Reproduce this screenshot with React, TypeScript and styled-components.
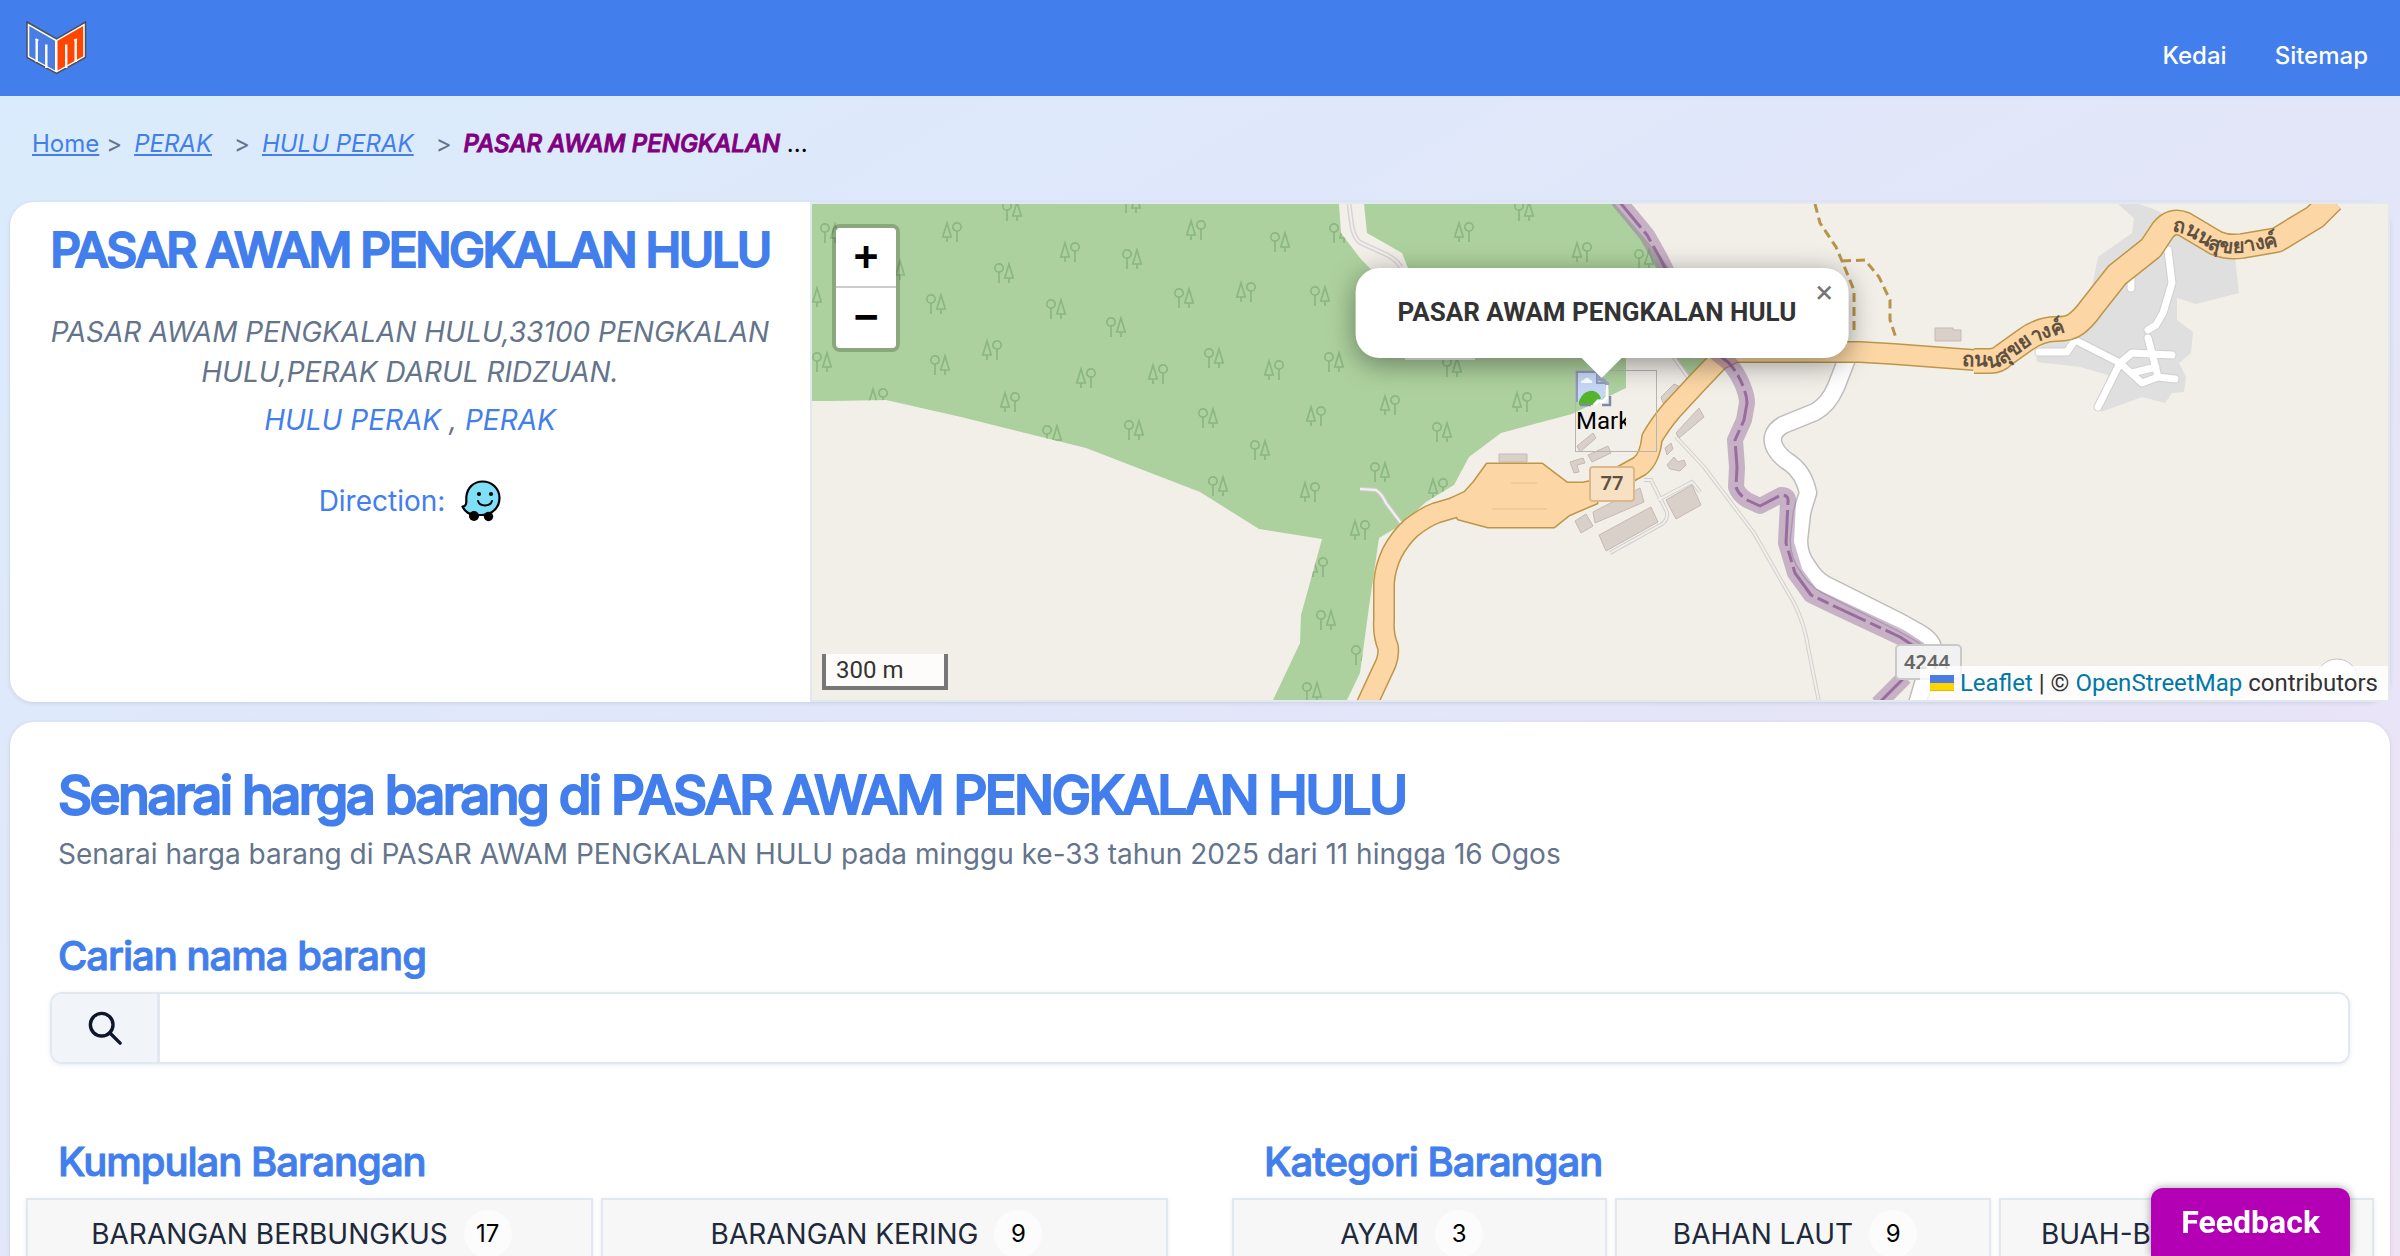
import React from "react";
import styled, { createGlobalStyle } from "styled-components";

const INTER = `Inter, "Liberation Sans", sans-serif`;
const ROBOTO = `Roboto, "Liberation Sans", sans-serif`;
const BLUE = "#427eec";
const SLATE = "#64748b";
const LINE = "#e2e8f0";

const GlobalStyle = createGlobalStyle`
  html { scrollbar-width: none; }
  body {
    margin: 0;
    font-family: ${INTER};
    background: #fff;
    color: #0f172a;
  }
  *, *::before, *::after { box-sizing: border-box; }
  h1, h2, h3, p, ol, ul, address { margin: 0; padding: 0; }
  button, input { font: inherit; }
`;

const Page = styled.div`
  min-height: 100vh;
  padding-bottom: 20px;
  background: linear-gradient(to bottom right, #d9ecfd, #e4e5f8 60%, #f0e2f5);
`;

const Header = styled.header`
  display: flex;
  justify-content: space-between;
  align-items: center;
  height: 96px;
  padding: 0 32px 0 24px;
  background: ${BLUE};
`;

const LogoLink = styled.a`
  display: block;
  line-height: 0;
`;

const HeaderNav = styled.nav`
  display: flex;
  gap: 48px;
  padding-top: 16px;
  font-size: 24px;
  font-weight: 500;
  line-height: 32px;
`;

const HeaderLink = styled.a`
  color: #fff;
  text-decoration: none;
`;

const Crumbs = styled.ol`
  display: flex;
  list-style: none;
  padding: 30px 32px 40px;
  font-size: 24px;
  line-height: 36px;
`;

const Crumb = styled.li<{ $gap?: number }>`
  display: flex;
  &:not(:first-child)::before {
    content: ">";
    margin: 0 12px 0 ${(p) => p.$gap ?? 22}px;
    color: ${SLATE};
  }
`;

const CrumbLink = styled.a<{ $italic?: boolean }>`
  color: ${BLUE};
  font-style: ${(p) => (p.$italic ? "italic" : "normal")};
  text-decoration: underline;
`;

const CrumbCurrent = styled.span`
  color: #000;
  em {
    color: #800080;
    font-weight: 500;
    -webkit-text-stroke: 1px #800080;
  }
`;

const Card = styled.section`
  margin: 0 10px 20px;
  border-radius: 24px;
  background: #fff;
  box-shadow: 0 1px 4px rgba(100, 116, 139, 0.2);
`;

const ShopCard = styled(Card)`
  display: grid;
  grid-template-columns: minmax(0, 40fr) minmax(0, 79fr);
  min-height: 500px;
`;

const ShopInfo = styled.div`
  padding: 18px 24px;
  text-align: center;
  font-size: 28px;
  line-height: 40px;
  color: ${SLATE};
`;

const Title = styled.h1`
  font-size: 48px;
  line-height: 60px;
  font-weight: 500;
  letter-spacing: -0.05em;
  color: ${BLUE};
  -webkit-text-stroke: 2px ${BLUE};
`;

const Address = styled.address`
  margin-top: 32px;
  font-style: italic;
`;

const Area = styled.p`
  margin-top: 8px;
  font-style: italic;
`;

const AreaLink = styled.a`
  color: ${BLUE};
  text-decoration: none;
`;

const Direction = styled.p`
  display: flex;
  justify-content: center;
  align-items: center;
  gap: 16px;
  margin-top: 40px;
  color: ${BLUE};
`;

const MapBox = styled.div`
  position: relative;
  overflow: hidden;
  border: 2px solid ${LINE};
  background: #f2efe9;
  font-family: ${ROBOTO};
  color: #333;
`;

const MapDrawing = styled.svg`
  position: absolute;
  inset: 0;
  width: 100%;
  height: 100%;
`;

const ZoomControl = styled.div`
  position: absolute;
  top: 20px;
  left: 20px;
  border: 4px solid rgba(0, 0, 0, 0.2);
  border-radius: 8px;
  background-clip: padding-box;
`;

const ZoomButton = styled.button`
  display: block;
  width: 60px;
  height: 60px;
  padding: 0 0 4px;
  border: 0;
  background: #fff;
  color: #000;
  font: bold 40px/56px "DejaVu Sans Mono", monospace;
  &:first-child {
    border-bottom: 2px solid #ccc;
    border-radius: 4px 4px 0 0;
  }
  &:last-child {
    border-radius: 0 0 4px 4px;
  }
`;

const Scale = styled.div`
  position: absolute;
  left: 10px;
  bottom: 10px;
  width: 126px;
  padding: 0 10px;
  border: 4px solid #777;
  border-top: 0;
  background: rgba(255, 255, 255, 0.8);
  font-size: 24px;
  line-height: 32px;
`;

const Attribution = styled.div`
  position: absolute;
  right: 0;
  bottom: 0;
  display: flex;
  align-items: center;
  padding: 0 10px;
  background: rgba(255, 255, 255, 0.8);
  font-size: 24px;
  line-height: 34px;
  white-space: pre;
`;

const MapLink = styled.a`
  color: #0078a8;
  text-decoration: none;
`;

const Flag = styled.svg`
  margin-right: 6px;
`;

const Popup = styled.div`
  position: absolute;
  left: 50%;
  top: 64px;
  margin-left: 2px;
  transform: translateX(-50%);
  padding: 24px 52px 26px 42px;
  border-radius: 24px;
  background: #fff;
  box-shadow: 0 6px 28px rgba(0, 0, 0, 0.4);
  font-size: 26px;
  font-weight: 700;
  line-height: 40px;
  white-space: nowrap;
  &::after {
    content: "";
    position: absolute;
    left: 50%;
    top: 100%;
    margin-left: -20px;
    border: 20px solid transparent;
    border-top-color: #fff;
    border-bottom: 0;
  }
`;

const PopupClose = styled.button`
  position: absolute;
  top: 0;
  right: 0;
  width: 48px;
  height: 48px;
  padding: 0;
  border: 0;
  background: transparent;
  color: #757575;
  font: 32px/46px ${ROBOTO};
`;

const Marker = styled.div`
  position: absolute;
  left: 50%;
  top: 166px;
  margin-left: -25px;
  width: 82px;
  height: 82px;
  border: 1px solid #b5b5b5;
  color: #000;
  font-size: 24px;
  line-height: 28px;
`;

const MarkerAlt = styled.span`
  display: block;
  width: 50px;
  overflow: hidden;
  svg { display: block; }
`;

const PriceCard = styled(Card)`
  padding: 40px 16px;
`;

const Intro = styled.div`
  padding: 0 32px;
`;

const SectionTitle = styled(Title).attrs({ as: "h2" })`
  font-size: 53px;
  line-height: 66px;
`;

const Lead = styled.p`
  margin-top: 6px;
  font-size: 28px;
  line-height: 40px;
  color: ${SLATE};
`;

const SubTitle = styled.h3`
  padding: 0 32px;
  margin-bottom: 12px;
  font-size: 40px;
  line-height: 48px;
  font-weight: 500;
  letter-spacing: -0.025em;
  color: ${BLUE};
  -webkit-text-stroke: 1px ${BLUE};
`;

const Search = styled.form`
  margin-top: 58px;
`;

const SearchBox = styled.div`
  display: flex;
  height: 72px;
  margin: 0 24px;
  overflow: hidden;
  border: 2px solid ${LINE};
  border-radius: 12px;
  box-shadow: 0 1px 4px rgba(100, 116, 139, 0.15);
`;

const SearchButton = styled.button`
  display: flex;
  justify-content: center;
  align-items: center;
  width: 108px;
  border: 0;
  border-right: 3px solid ${LINE};
  background: #f1f5f9;
  color: #0f172a;
`;

const SearchInput = styled.input`
  flex: 1;
  min-width: 0;
  padding: 0 24px;
  border: 0;
  outline: 0;
  background: #fff;
  font-size: 28px;
`;

const Groups = styled.div`
  display: grid;
  grid-template-columns: repeat(2, minmax(0, 1fr));
  gap: 64px;
  margin-top: 74px;
`;

const Tiles = styled.div<{ $columns: number }>`
  display: grid;
  grid-template-columns: repeat(${(p) => p.$columns}, minmax(0, 1fr));
  gap: 8px;
`;

const Tile = styled.button`
  display: flex;
  justify-content: center;
  align-items: center;
  gap: 16px;
  padding: 10px 16px 10px 0;
  border: 2px solid ${LINE};
  background: #f7f7f7;
  color: #1e293b;
  font-size: 28px;
  line-height: 40px;
  white-space: nowrap;
  box-shadow: 0 1px 4px rgba(100, 116, 139, 0.15);
`;

const Count = styled.span`
  width: 48px;
  height: 48px;
  border-radius: 50%;
  background: #fcfcfc;
  color: #000;
  font-size: 24px;
  line-height: 48px;
  text-align: center;
`;

const Feedback = styled.button`
  position: fixed;
  right: 50px;
  bottom: 0;
  padding: 14px 30px;
  border: 0;
  border-radius: 12px 12px 0 0;
  background: #b400b4;
  color: #fff;
  font: 700 32px/40px ${ROBOTO};
  box-shadow: 0 0 8px rgba(0, 0, 0, 0.4);
`;

const Logo = () => (
  <svg width="64" height="56" viewBox="24 19 64 56" fill="none" aria-hidden="true">
    <path d="M27 21 56.5 38 85.500 21V56.500L56.500 72.500 27 56.500Z" fill="#fff" stroke="#4d4f58" strokeWidth="1.500" />
    <path d="M29.300 25 55 39.800V69.500L29.300 55.300Z" fill="#4a7de2" />
    <path d="M83.200 25 57.500 39.800V69.500L83.200 55.300Z" fill="#ff4500" />
    <path d="M36.700 61V38M46.300 67V43.500M66.200 67V43.500M75.700 61V38" stroke="#fff" strokeWidth="2.400" />
    <path d="M35.500 37.800 38.500 39.300M74 39.300 77 37.800" stroke="#fff" strokeWidth="1.500" />
  </svg>
);

const WazeIcon = () => (
  <svg width="40" height="42" viewBox="0 0 40 42" role="img" aria-label="Waze">
    <path
      d="M21.500 1.500C31 1.500 38.500 8.800 38.500 18 38.500 27.500 31 34.800 21 35H14C8.500 34.500 3.500 31 1.500 26.500 4.500 26.300 5.500 24.500 5.300 21V17C6 8 12.500 1.500 21.500 1.500Z"
      fill="#7fdff6"
      stroke="#000"
      strokeWidth="2.200"
      strokeLinejoin="round"
    />
    <circle cx="13" cy="36" r="5" />
    <circle cx="27.500" cy="36.500" r="4.700" />
    <circle cx="18" cy="14" r="2.100" />
    <circle cx="30" cy="14" r="2.100" />
    <path d="M17 21C19 27 29 27 31 21" fill="none" stroke="#000" strokeWidth="2" strokeLinecap="round" />
  </svg>
);

const SearchIcon = () => (
  <svg width="34" height="34" viewBox="0 0 36 36" fill="none" stroke="currentColor" strokeWidth="3.600" aria-hidden="true">
    <circle cx="14.500" cy="14.500" r="12" />
    <path d="M23 23 34 34" strokeLinecap="round" />
  </svg>
);

const BrokenImage = () => (
  <svg width="36" height="36" viewBox="0 0 36 36" aria-hidden="true">
    <path d="M1 1H21L29 9V24L24 31H1Z" fill="#c6d8f7" />
    <path d="M1 31V1H21V12H32" fill="none" stroke="#8f9bb5" strokeWidth="2" />
    <path d="M21 1 33 12V18H29V12L21 9Z" fill="#9aa5be" />
    <path d="M5 12C5 9 7 9 8 9 9 6 13 6 14 9 16 9 17 11 16 12Z" fill="#fff" />
    <path d="M3 30C8 18 20 16 25 27L20 32 16 34H3Z" fill="#55b32c" />
    <path d="M18 34 22 30 27 31 31 26V14" fill="none" stroke="#fff" strokeWidth="3" />
    <path d="M4 34H15M26 34H34V25" fill="none" stroke="#7e8ba6" strokeWidth="2.500" />
  </svg>
);

const FOREST =
  "M811 204H1339L1341 233 1360 258 1410 310 1405 360H1475L1480 300 1408 268 1402 253 1367 233 1364 204H1615L1661 257 1669 268 1710 357 1688 378 1672 358 1626 350V388L1572 414 1501 433 1469 457 1454 485 1426 502 1401 525 1379 538 1369 607 1360 673 1347 700H1273L1300 643 1301 615 1322 539 1259 529 1200 492 1086 448 961 417 886 400 832 401H811Z";

const ROUND_FIRST: [number, number][] = [
  [1012, 211], [1131, 203], [830, 233], [1280, 242], [1339, 233], [1132, 259], [1004, 273], [895, 270],
  [936, 304], [1056, 309], [1184, 298], [1320, 296], [1116, 327], [812, 297], [822, 362], [940, 365],
  [1214, 358], [1334, 362], [1208, 418], [1134, 430], [1052, 435], [1260, 450], [1218, 486], [1326, 620],
  [1312, 692], [1524, 211], [1644, 259], [1442, 432], [1380, 472], [1452, 367], [1361, 655],
];

const CONIFER_FIRST: [number, number][] = [
  [952, 232], [1196, 230], [1070, 252], [1246, 292], [992, 350], [1274, 370], [1086, 378], [1158, 374],
  [1010, 402], [1316, 416], [1310, 492], [1318, 567], [878, 398], [1464, 232], [1582, 252], [1390, 405],
  [1522, 402], [1438, 488], [1360, 530],
];

const BORDER_LINE =
  "M1618 200 1647 235 1660 258 1665 268 1700 340 1729 363C1742 378 1747 395 1747 403L1744 420 1735 440 1737 467 1736 487Q1738 494 1747 500L1760 506 1781 495Q1789 495 1788 502L1786 543 1795 573 1811 595 1836 607 1900 637 1920 650M1878 704 1905 677";
const MAIN_ROAD_WEST =
  "M1366 706 1386 663Q1389 655 1388 647 1383 635 1384 620V583Q1385 568 1392 553 1400 538 1411 528 1425 517 1436 513L1470 503M1580 496Q1600 492 1611 482L1640 466Q1650 458 1652 438 1660 424 1672 410L1697 383 1719 360 1735 352H1860L1894 354 1974 360";
const MAIN_ROAD_EAST =
  "M1974 361H1990Q1998 361 2004 355L2025 340Q2040 329 2056 329 2070 329 2076 324 2084 318 2091 308L2117 275 2151 248 2163 230Q2172 219 2184 224L2216 243Q2228 248 2242 246L2277 240 2315 217 2332 200";
const PLAZA =
  "M1450 499 1465 492 1474 482 1487 464H1542L1567 483H1583L1597 480V503L1569 515 1554 527H1488L1458 519Z";
const WHITE_ROAD =
  "M1848 356 1836 387Q1828 405 1815 412L1783 425Q1768 434 1775 448 1780 457 1790 463 1804 473 1808 493 1804 505 1802 513L1799 540Q1799 556 1808 567 1815 579 1826 585L1900 622 1918 632Q1936 642 1932 653L1917 704";
const VILLAGE_ROADS =
  "M2168 250 2172 283 2163 313 2156 325 2148 330M2131 278V288M2148 338 2153 357 2158 377 2175 379M2158 377 2142 383 2120 363 2075 340 2067 352H2039M2120 363 2098 407M2120 363 2132 353 2151 354 2172 355M2132 373 2156 367";
const SERVICE_ROADS =
  "M1676 437 1704 467 1754 533 1794 603Q1805 625 1808 647L1819 702M1644 480 1651 480 1667 512Q1668 520 1662 524L1610 553M1658 500 1692 482 1700 492";
const BUILDINGS =
  "M1499 454H1527V462H1499ZM1593 512 1640 488 1644 502 1595 523ZM1599 535 1651 507 1658 522 1606 551ZM1666 500 1692 485 1701 505 1676 519ZM1575 521 1586 514 1593 526 1581 533ZM1577 446 1593 433 1596 438 1580 452ZM1588 455 1608 446 1611 453 1592 462ZM1570 462 1583 458 1585 463 1577 465 1579 472 1574 473ZM1699 408 1704 417 1679 438 1676 433ZM1661 397 1674 384 1681 387 1663 403ZM1665 448 1671 443 1673 449 1667 455ZM1667 465 1674 457 1678 462 1684 460 1686 465 1680 471 1670 469ZM1935 328H1953V330H1961V341H1935Z";

const MapArt = () => (
  <MapDrawing viewBox="812 204 1576 496" preserveAspectRatio="xMidYMid slice" aria-hidden="true">
    <defs>
      <clipPath id="forest"><path d={FOREST} /></clipPath>
      <g id="round" fill="none" stroke="#8bb781" strokeWidth="1.700">
        <circle cx="-5" cy="-5" r="4.200" />
        <path d="M-5-1V10M5-9 .8 5H9.200ZM5 5V10" />
      </g>
      <path id="label-west" d="M1962 366 1992 367Q2002 367 2012 358L2035 342 2066 332" />
      <path id="label-east" d="M2172 231 2186 234 2212 250Q2226 254 2242 253L2284 245" />
    </defs>
    <rect x="600" y="0" width="2200" height="900" fill="#f2efe9" />
    <path d={FOREST} fill="#add19e" />
    <g clipPath="url(#forest)">
      {ROUND_FIRST.map(([x, y]) => <use key={`${x}-${y}`} href="#round" transform={`translate(${x} ${y})`} />)}
      {CONIFER_FIRST.map(([x, y]) => <use key={`${x}-${y}`} href="#round" transform={`translate(${x} ${y}) scale(-1 1)`} />)}
    </g>
    <path d="M2118 204 2134 218 2132 233 2098 257 2092 287 2036 353 2037 362 2080 367 2108 375 2101 412 2142 397 2165 403 2172 393 2184 392 2186 377 2179 363 2191 353 2193 332 2177 320V298L2196 304 2239 293 2235 257 2156 210 2139 204Z" fill="#dfdfdf" />
    <g fill="none">
      <path d="M1349 204 1352 227Q1355 240 1361 243L1383 253Q1395 258 1401 267" stroke="#d8d2d6" strokeWidth="5" />
      <path d="M1349 204 1352 227Q1355 240 1361 243L1383 253Q1395 258 1401 267" stroke="#f2efe9" strokeWidth="2" />
      <path d={SERVICE_ROADS} stroke="#d2cfcf" strokeWidth="4" />
      <path d={SERVICE_ROADS} stroke="#f2efe9" strokeWidth="2" />
      <path d="M1360 489 1376 490Q1382 494 1386 503L1401 523M1673 356 1690 380" stroke="#d4ccd2" strokeWidth="4" />
      <path d="M1360 489 1376 490Q1382 494 1386 503L1401 523M1673 356 1690 380" stroke="#f4f1f1" strokeWidth="2" />
      <path d="M1815 204 1820 223 1836 247 1842 261 1854 290V333M1842 261 1865 260 1879 277 1890 300V320L1896 338" stroke="#b8944a" strokeWidth="3" strokeDasharray="9 5" />
    </g>
    <path d={BUILDINGS} fill="#d9d0c9" stroke="#c6b9b1" strokeWidth="1" />
    <g fill="none" strokeLinejoin="round">
      <path d={WHITE_ROAD} stroke="#bdbdbd" strokeWidth="19" />
      <path d={VILLAGE_ROADS} stroke="#cfcfcf" strokeWidth="9" strokeLinecap="round" />
      <path d={WHITE_ROAD} stroke="#fff" strokeWidth="16" />
      <path d={VILLAGE_ROADS} stroke="#fff" strokeWidth="7" strokeLinecap="round" />
      <path d={MAIN_ROAD_WEST} stroke="#bd9748" strokeWidth="22" />
      <path d={MAIN_ROAD_EAST} stroke="#bd9748" strokeWidth="26" />
      <path d={PLAZA} stroke="#bd9748" strokeWidth="3" />
      <path d={PLAZA} fill="#fcd6a4" />
      <path d={MAIN_ROAD_WEST} stroke="#fcd6a4" strokeWidth="19" />
      <path d={MAIN_ROAD_EAST} stroke="#fcd6a4" strokeWidth="23" />
      <path d="M1511 483H1537M1492 509H1547" stroke="#eac08a" strokeWidth="1" />
      <path d={BORDER_LINE} stroke="#9c74a2" strokeOpacity=".5" strokeWidth="16" />
      <path d={BORDER_LINE} stroke="#93659a" strokeOpacity=".9" strokeWidth="3" strokeDasharray="36 5 12 5" />
    </g>
    <circle cx="2337" cy="680" r="21" fill="#fff" stroke="#c4c4c4" />
    <path d="M2230 702Q2290 678 2388 690V702Z" fill="#fff" />
    <rect x="1590" y="467" width="44" height="34" rx="3" fill="#f8e0c3" stroke="#dcb88c" strokeWidth="2" />
    <rect x="1896" y="645" width="65" height="34" rx="4" fill="#f1f1f1" stroke="#c9c9c9" strokeWidth="2" />
    <g fontFamily='"Noto Sans", sans-serif' fill="#5f5140">
      <text x="1612" y="490" fontSize="20" fontWeight="600" textAnchor="middle">77</text>
      <text x="1927" y="669" fontSize="20" fontWeight="600" fill="#666" textAnchor="middle">4244</text>
      <text fontSize="20" fontWeight="600"><textPath href="#label-west">ถนนสุขยางค์</textPath></text>
      <text fontSize="20" fontWeight="600"><textPath href="#label-east">ถนนสุขยางค์</textPath></text>
    </g>
  </MapDrawing>
);

const groups = [
  { title: "Kumpulan Barangan", tiles: [["BARANGAN BERBUNGKUS", 17], ["BARANGAN KERING", 9]] },
  { title: "Kategori Barangan", tiles: [["AYAM", 3], ["BAHAN LAUT", 9], ["BUAH-BUAHAN", 7]] },
];

export default function App() {
  return (
    <Page>
      <GlobalStyle />
      <Header>
        <LogoLink href="#" aria-label="Home"><Logo /></LogoLink>
        <HeaderNav>
          <HeaderLink href="#kedai">Kedai</HeaderLink>
          <HeaderLink href="#sitemap">Sitemap</HeaderLink>
        </HeaderNav>
      </Header>
      <nav aria-label="Breadcrumb">
        <Crumbs>
          <Crumb><CrumbLink href="#">Home</CrumbLink></Crumb>
          <Crumb $gap={7}><CrumbLink href="#perak" $italic>PERAK</CrumbLink></Crumb>
          <Crumb><CrumbLink href="#hulu-perak" $italic>HULU PERAK</CrumbLink></Crumb>
          <Crumb><CrumbCurrent><em>PASAR AWAM PENGKALAN</em> ...</CrumbCurrent></Crumb>
        </Crumbs>
      </nav>
      <main>
        <ShopCard>
          <ShopInfo>
            <Title>PASAR AWAM PENGKALAN HULU</Title>
            <Address>PASAR AWAM PENGKALAN HULU,33100 PENGKALAN HULU,PERAK DARUL RIDZUAN.</Address>
            <Area>
              <AreaLink href="#hulu-perak">HULU PERAK</AreaLink> , <AreaLink href="#perak">PERAK</AreaLink>
            </Area>
            <Direction>
              Direction: <LogoLink href="#waze"><WazeIcon /></LogoLink>
            </Direction>
          </ShopInfo>
          <MapBox>
            <MapArt />
            <Marker><MarkerAlt><BrokenImage />Marker</MarkerAlt></Marker>
            <Popup>
              PASAR AWAM PENGKALAN HULU
              <PopupClose aria-label="Close popup">×</PopupClose>
            </Popup>
            <ZoomControl>
              <ZoomButton aria-label="Zoom in">+</ZoomButton>
              <ZoomButton aria-label="Zoom out">−</ZoomButton>
            </ZoomControl>
            <Scale>300 m</Scale>
            <Attribution>
              <Flag width="24" height="16" viewBox="0 0 24 16" aria-hidden="true">
                <path fill="#4c7be1" d="M0 0h24v8H0z" />
                <path fill="#ffd500" d="M0 8h24v7H0z" />
                <path fill="#e0bc00" d="M0 15h24v1H0z" />
              </Flag>
              <MapLink href="#leaflet">Leaflet</MapLink>
              {" | © "}
              <MapLink href="#osm">OpenStreetMap</MapLink>
              {" contributors"}
            </Attribution>
          </MapBox>
        </ShopCard>
        <PriceCard>
          <Intro>
            <SectionTitle>Senarai harga barang di PASAR AWAM PENGKALAN HULU</SectionTitle>
            <Lead>Senarai harga barang di PASAR AWAM PENGKALAN HULU pada minggu ke-33 tahun 2025 dari 11 hingga 16 Ogos</Lead>
          </Intro>
          <Search onSubmit={(e) => e.preventDefault()}>
            <SubTitle><label htmlFor="item-search">Carian nama barang</label></SubTitle>
            <SearchBox>
              <SearchButton type="submit" aria-label="Cari"><SearchIcon /></SearchButton>
              <SearchInput id="item-search" type="search" />
            </SearchBox>
          </Search>
          <Groups>
            {groups.map((group) => (
              <div key={group.title}>
                <SubTitle>{group.title}</SubTitle>
                <Tiles $columns={group.tiles.length}>
                  {group.tiles.map(([name, count]) => (
                    <Tile key={name}>{name}<Count>{count}</Count></Tile>
                  ))}
                </Tiles>
              </div>
            ))}
          </Groups>
        </PriceCard>
      </main>
      <Feedback>Feedback</Feedback>
    </Page>
  );
}
